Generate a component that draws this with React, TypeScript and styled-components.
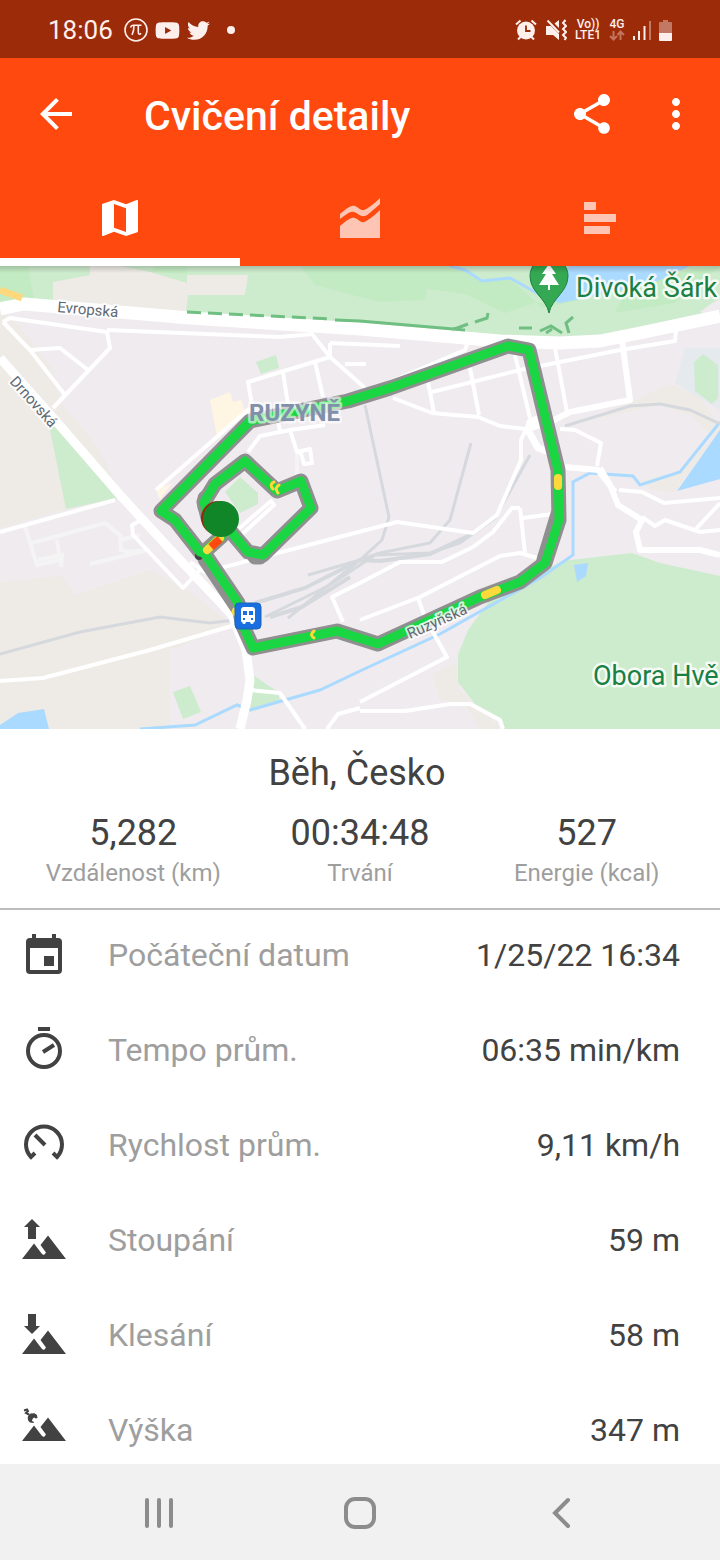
import React from "react";
import styled, { createGlobalStyle } from "styled-components";
import { FaYoutube, FaTwitter } from "react-icons/fa";
import { MdArrowBack, MdMap, MdMoreVert, MdShare } from "react-icons/md";

const Global = createGlobalStyle`
  *, *::before, *::after { box-sizing: border-box; }
  body { margin: 0; background: #fff; color: #424242; font-family: Roboto, "Liberation Sans", sans-serif; }
  svg { display: block; }
`;

const Screen = styled.div`
  display: flex;
  flex-direction: column;
  height: 100vh;
`;

const StatusBar = styled.div`
  display: flex;
  flex: none;
  align-items: center;
  justify-content: space-between;
  height: 58px;
  padding: 2px 48px 0;
  background: #9c2b0a;
  color: #fdf0ec;
`;

const StatusGroup = styled.div<{ $gap: number }>`
  display: flex;
  align-items: center;
  gap: ${(p) => p.$gap}px;
`;

const Clock = styled.time`
  margin-right: 4px;
  font-size: 26px;
  line-height: 32px;
`;

const Dot = styled.span`
  width: 8px;
  height: 8px;
  margin-left: 10px;
  border-radius: 50%;
  background: currentColor;
`;

const NetworkLabel = styled.div`
  display: flex;
  flex-direction: column;
  align-items: center;
  font-size: 12px;
  font-weight: 500;
  line-height: 11px;
`;

const Header = styled.header`
  flex: none;
  background: #ff490f;
  color: #fff;
`;

const Toolbar = styled.div`
  display: flex;
  align-items: center;
  height: 112px;
  padding: 0 20px 0 32px;
`;

const IconButton = styled.button`
  display: flex;
  align-items: center;
  justify-content: center;
  width: 48px;
  height: 48px;
  padding: 0;
  border: 0;
  background: none;
  color: inherit;
`;

const Actions = styled.div`
  display: flex;
  gap: 36px;
`;

const Title = styled.h1`
  flex: 1;
  margin: 4px 0 0 64px;
  font-size: 41px;
  font-weight: 500;
  line-height: 48px;
`;

const Tabs = styled.div`
  display: grid;
  grid-template-columns: repeat(3, 1fr);
`;

const Tab = styled.button<{ $active?: boolean }>`
  display: flex;
  align-items: center;
  justify-content: center;
  height: 96px;
  padding: 8px 0 0;
  border: 0;
  border-bottom: 8px solid ${(p) => (p.$active ? "#fff" : "transparent")};
  background: none;
  color: ${(p) => (p.$active ? "#fff" : "#ffc5b4")};
`;

const Content = styled.main`
  flex: 1;
  min-height: 0;
  overflow-y: auto;
  scrollbar-width: none;
`;

const MapPanel = styled.section`
  aspect-ratio: 720 / 463;
  overflow: hidden;
`;

const MapDrawing = styled.svg`
  width: 100%;
  height: 100%;
  font-family: Roboto, "Liberation Sans", sans-serif;
`;

const Summary = styled.section`
  padding: 22px 20px 19px;
  border-bottom: 2px solid #bdbdbd;
  text-align: center;
`;

const Activity = styled.h2`
  margin: 0;
  padding-right: 6px;
  font-size: 36px;
  font-weight: 400;
  line-height: 44px;
`;

const Totals = styled.dl`
  display: grid;
  grid-template-columns: repeat(3, 1fr);
  margin: 14px 0 0;
`;

const Total = styled.div`
  display: flex;
  flex-direction: column-reverse;
`;

const TotalLabel = styled.dt`
  color: #9e9e9e;
  font-size: 24px;
  line-height: 32px;
`;

const TotalValue = styled.dd`
  margin: 0;
  font-size: 36px;
  line-height: 48px;
`;

const Details = styled.dl`
  display: flex;
  flex-direction: column;
  gap: 5px;
  margin: 0;
`;

const Detail = styled.div`
  display: flex;
  align-items: center;
  height: 90px;
  padding: 0 40px 0 20px;
  font-size: 32px;
  line-height: 40px;
`;

const DetailLabel = styled.dt`
  flex: 1;
  padding-left: 40px;
  color: #9e9e9e;
`;

const DetailValue = styled.dd`
  margin: 0;
`;

const NavBar = styled.nav`
  display: grid;
  flex: none;
  grid-template-columns: repeat(3, 1fr);
  justify-items: center;
  align-items: center;
  height: 96px;
  padding: 2px 58px 0;
  background: #f1f1f1;
  color: #8c8c8c;
`;

const PiIcon = () => (
  <svg width="24" height="24" viewBox="0 0 24 24" fill="none" stroke="currentColor" strokeWidth="1.6" aria-hidden="true">
    <circle cx="12" cy="12" r="11" />
    <path d="M6.500 9.500c.6-1.700 1.200-2.200 2.500-2.200h8.500M10 7.500c0 4-.5 6.500-2 9.300M14.300 7.500v6.500c0 2.500 1.500 2.800 2.700 1.200" />
  </svg>
);

const AlarmIcon = () => (
  <svg width="22" height="22" viewBox="0 0 22 22" fill="none" stroke="currentColor" aria-hidden="true">
    <path d="M1 5.500 5.500 1.500M21 5.500 16.500 1.500M3 20.500l3-3M19 20.500l-3-3" strokeWidth="2" />
    <circle cx="11" cy="11.500" r="9" fill="currentColor" stroke="none" />
    <path d="M11 6.500v5.500h4.500" stroke="#9c2b0a" strokeWidth="1.800" />
  </svg>
);

const MuteIcon = () => (
  <svg width="22" height="22" viewBox="0 0 22 22" fill="currentColor" aria-hidden="true">
    <path d="M1 7h5l8 8v6l-6-5H1zM9.500 4.500 14 1v8z" />
    <path d="M2.500 1.500 14 13.500" stroke="currentColor" strokeWidth="2" />
    <path d="M20.500 1l-2.500 3 3 3-3 3 3 3-3 3 3 3-1.500 2" fill="none" stroke="currentColor" strokeWidth="2" />
  </svg>
);

const DataArrows = () => (
  <svg width="16" height="11" viewBox="0 0 16 11" fill="none" stroke="#c4735c" strokeWidth="2" aria-hidden="true">
    <path d="M4.500 1v8M1 6l3.500 3.500L8 6M11.500 10V2M8.500 5l3-3.500L15 5" />
  </svg>
);

const SignalIcon = () => (
  <svg width="18" height="20" viewBox="0 0 18 20" fill="currentColor" aria-hidden="true">
    <path d="M0 16h2v4H0zM5 11h2v9H5zM10.500 6h2v14h-2z" />
    <path d="M16 1h2v19h-2z" opacity=".4" />
  </svg>
);

const BatteryIcon = () => (
  <svg width="13" height="21" viewBox="0 0 13 21" fill="currentColor" aria-hidden="true">
    <path d="M4 0h5v2h3a1 1 0 0 1 1 1v10H0V3a1 1 0 0 1 1-1h3z" opacity=".4" />
    <path d="M0 13h13v7a1 1 0 0 1-1 1H1a1 1 0 0 1-1-1z" />
  </svg>
);

const AreaChartIcon = () => (
  <svg width="40" height="40" viewBox="0 0 40 40" fill="currentColor" aria-hidden="true">
    <path d="M0 16C8 9 12 7 15 8s6 5 9 4 9-5 16-12v6c-8 7-12 11-15 12-5 1-7-3-11-4S6 17 0 21z" />
    <path d="M0 28c8-7 12-9 15-8s6 5 9 4 9-5 16-12v28H0z" />
  </svg>
);

const BarsIcon = () => (
  <svg width="32" height="32" viewBox="0 0 32 32" fill="currentColor" aria-hidden="true">
    <path d="M0 0h12v8H0zM0 12h32v8H0zM0 24h26v8H0z" />
  </svg>
);

const DetailIcon = ({ children }: { children: React.ReactNode }) => (
  <svg width="48" height="48" viewBox="0 0 48 48" fill="#424242" aria-hidden="true">
    {children}
  </svg>
);

const calendar = (
  <path
    fillRule="evenodd"
    d="M12 3h4v4h16V3h4v4h2a4 4 0 0 1 4 4v28a4 4 0 0 1-4 4H10a4 4 0 0 1-4-4V11a4 4 0 0 1 4-4h2zM10 17v22h28V17zM24 25h10v10H24z"
  />
);

const timer = (
  <g fill="none" stroke="#424242" strokeWidth="4">
    <path d="M18 3h12M23 26l11-7" />
    <circle cx="24" cy="25" r="16" />
  </g>
);

const gauge = (
  <g fill="none" stroke="#424242" strokeWidth="4">
    <path d="M15 32 11 36A18 18 0 1 1 37 36l-4-4M15 14l10 10" />
  </g>
);

const mountains = <path d="M2 43 14 27.500l8 10.500 2 1 2-2.500-5.500-7.500L28 19.500l18 23.500z" />;

const ascent = (
  <>
    <path d="M12 3l8 8h-4v12H8V11H4z" />
    {mountains}
  </>
);

const descent = (
  <>
    <path d="M8 3h8v12h4l-8 8-8-8h4z" />
    {mountains}
  </>
);

const altitude = (
  <>
    <path d="M4 4.500 7 3.500 8 5 6 7l3 1.500" fill="none" stroke="#424242" strokeWidth="2" />
    <path d="M8 10q2-3.500 5-2.500l1-.5 3 2 .5 3-1.500.5-2-1-1.500 1.500-.5 2 2 1-.5 1-3.500-.5q-3-2-2-6.500z" />
    <path d="M2 35 14 19.500l8 10.500 2 1 2-2.500-5.500-7.500L28 11.500 46 35z" />
  </>
);

const details = [
  { icon: calendar, label: "Počáteční datum", value: "1/25/22 16:34" },
  { icon: timer, label: "Tempo prům.", value: "06:35 min/km" },
  { icon: gauge, label: "Rychlost prům.", value: "9,11 km/h" },
  { icon: ascent, label: "Stoupání", value: "59 m" },
  { icon: descent, label: "Klesání", value: "58 m" },
  { icon: altitude, label: "Výška", value: "347 m" },
];

const totals = [
  { label: "Vzdálenost (km)", value: "5,282" },
  { label: "Trvání", value: "00:34:48" },
  { label: "Energie (kcal)", value: "527" },
];

const outerRoute =
  "M204 553 238 603 243 626 253 648 337 631 378 644 480 597 520 582 545 563 559 520 558 470 529 350 508 346 390 388 348 401 250 421 161 511 175 520 200 552";
const innerRoute = "M222 536 203 553M232 533 248 552 263 555 311 508 301 481 277 491 245 461 215 484 204 502 208 518";

const RouteMap = () => (
  <MapDrawing viewBox="0 266 720 463" preserveAspectRatio="xMidYMid slice" role="img" aria-label="Trasa běhu">
    <defs>
      <linearGradient id="header-shadow" x1="0" y1="0" x2="0" y2="1">
        <stop offset="0" stopOpacity=".18" />
        <stop offset="1" stopOpacity="0" />
      </linearGradient>
    </defs>
    <path fill="#efebef" d="M0 266h720v463H0z" />
    <g fill="#eeebe6">
      <path d="M0 310 18 325 52 368 60 402 80 425 100 452 122 496 66 509 0 528zM60 415 75 425 105 460 122 500 55 428z" />
      <path d="M0 582 62 576 75 595 150 570 185 588 232 625 170 650V729H0z" />
      <path d="M567 425 625 405 670 384 700 397 720 428 715 440 690 415 660 405zM432 675 458 662 460 690 502 729H480L465 704 440 700zM640 480 680 473 720 430 675 492 650 490z" />
    </g>
    <path fill="#cdebcd" d="M0 266H720V320L600 340H560L500 338 360 327 190 318 60 307 0 303z" />
    <path fill="#c3ebc3" d="M0 266h28l6 34-34 0zM155 266H187v8l-37-2zM300 266H430L425 300 380 302 360 297 315 285zM430 266h25l27 15 28-3 32 30 38-8 50-22 90-12-45 37-60 10 10-20-90 10-30 10-40-19-60-8z" />
    <path fill="#eeebe6" d="M53 282 90 275V266h30l30 6 37 11v-8h61l-3 20h-57l-2 17L53 302z" />
    <path fill="#aadaff" d="M534 291 570 266H690L660 280 640 286 575 300 560 303 542 299z" />
    <path fill="none" stroke="#aadaff" strokeWidth="3" d="M450 266 465 270 482 281 510 278 537 293" />
    <path fill="#efebef" d="M700 312 712 303 720 299V318z" />
    <path fill="#e5eaee" d="M685 348H720V410L675 383z" />
    <path
      fill="#cdebcd"
      d="M694 362 703 354 718 365V398L712 404 695 391zM256 362 276 355 279 368 261 374zM173 692 190 686 201 712 183 719zM253 675 278 692 280 702 250 712zM49 425 58 427 118 498 66 509zM225 492 240 477 258 493V504L240 513z"
    />
    <path fill="#cdebcd" d="M562 561 632 553 660 563 720 576V729H504L500 718 475 704 458 682V655L468 630 490 600 530 578z" />
    <path fill="#fef5e3" d="M210 400 230 392 233 402 241 400 246 413 217 437zM156 490 172 483 160 500z" />
    <path fill="#aadaff" d="M0 725 18 713 44 709 49 729H0zM720 430 677 491 720 479zM574 565 588 563 586 576 577 582z" />
    <path
      fill="none"
      stroke="#aadaff"
      strokeWidth="3"
      d="M140 729 195 725 237 705 250 710 320 690 360 671 440 634 540 578 573 555V482L590 473 633 476 640 485 680 472 720 422"
    />
    <g fill="none" stroke="#d5d9de" strokeWidth="3">
      <path d="M0 654 80 632 160 617 210 623 235 620M565 426 630 406 660 404 690 410 720 424M365 405 389 517 382 540 360 560 288 618M471 443 450 520 430 543 380 553 360 560 308 575M530 455 495 518 460 543 430 553 375 555 330 585 265 617" />
      <path d="M255 603 305 588 360 560 380 561 430 554 470 535M270 617 302 607 350 577" strokeWidth="4" />
    </g>
    <g fill="none" stroke="#f5f4f4" strokeWidth="4">
      <path d="M25 527 37 565 60 560 57 540M32 543 105 523 120 535 121 550 127 552 150 550M120 540 140 535M38 560 62 555 61 567M90 564 145 551M297 452V475" />
    </g>
    <g fill="none" stroke="#fff" strokeWidth="4" strokeLinejoin="round">
      <path d="M3 322 10 318 107 332 110 348 53 408M107 330 280 337 312 334 330 357 365 388M3 322 30 350 65 395M30 350 60 348 88 370M330 343V357L248 382 252 405M283 372 288 405M315 362 323 397M330 343 400 346M345 364H366" />
      <path d="M248 452 260 436 290 430 325 425M290 430 297 452 310 449 312 463 304 464 300 450M278 420 280 432M156 490 250 408M390 382 465 350 468 342M393 398 432 413 478 417 500 426 526 429M428 382 434 413M432 392 520 370 620 350 675 341 676 330M470 368 479 415M515 355 530 418M555 348 567 412" />
      <path d="M560 429 575 430 601 443 597 466M526 429 521 440V460L497 515 473 533 397 522 320 542 205 572 190 562M520 508 512 508 493 532 473 547 442 562H400L360 583 332 597 343 622M360 620 420 597 500 556 520 553 537 558M520 508 525 553M523 518 560 513M418 598 426 620 447 657 360 702M360 711 405 711 450 704 470 704 500 720 503 729M327 729 338 714 360 708" />
      <path d="M619 490 642 492 664 503 720 498M642 517 655 526 665 520 700 532 720 530M695 530 720 503M0 532 115 500M142 520 132 525 133 535 183 588 200 570M0 681 43 678 150 650 235 625M250 690 280 693 305 729M238 538 274 505 271 501 235 532" />
    </g>
    <g fill="none" stroke="#fff" strokeLinejoin="round">
      <path strokeWidth="6" d="M622 340 630 400 570 412 550 422 528 429M600 468 610 485 618 505 642 520 636 532 640 550H700L720 555M565 467 598 470 615 492" />
      <path strokeWidth="7" d="M545 416 530 422 528 430 538 448 552 453" />
      <path strokeWidth="9" d="M0 358 55 420 120 495 180 560 232 615 246 650 250 680 247 700 240 729" />
      <path strokeWidth="13" d="M0 309 24 304 60 307 190 318 360 329 500 341 560 343 600 341 640 333 720 316" />
    </g>
    <path fill="none" stroke="#fed87c" strokeWidth="7" d="M0 290 22 298" />
    <path fill="none" stroke="#70bf82" strokeWidth="3" d="M187 312 334 319" strokeDasharray="14 7" />
    <path fill="none" stroke="#70bf82" strokeWidth="3" d="M335 320 360 321 465 330M452 330 468 324M475 322 487 318 488 313M519 328H532M540 331 551 326 562 333M546 333 552 329M569 333 566 323 573 317" />
    <g fill="none" stroke="#8f8f8f" strokeWidth="15" strokeLinejoin="round" strokeLinecap="round">
      <path d={outerRoute} />
      <path d={innerRoute} />
      <path d="M205 498V507M558 514 544 560M205 559 237 607M255 557H260" />
    </g>
    <circle cx="199" cy="556" r="4" fill="#444" />
    <g fill="none" stroke="#1bd643" strokeWidth="9" strokeLinejoin="round" strokeLinecap="round">
      <path d={outerRoute} />
      <path d={innerRoute} />
    </g>
    <g fill="none" stroke="#fdd93b" strokeWidth="8" strokeLinecap="round">
      <path d="M558 478V486" />
      <path d="M485 595 497 590M207 550 220 538" />
      <path d="M314 631Q309 635 314 638M234 609Q232 612 235 615M274 482Q269 484 273 489M279 485Q274 488 278 493" strokeWidth="3" />
    </g>
    <path stroke="#ff490f" strokeWidth="8" d="M211 547 220 539" />
    <circle cx="218" cy="518" r="17" fill="#8f2b10" />
    <circle cx="221" cy="519" r="18" fill="#108628" />
    <rect x="235" y="603" width="26" height="26" rx="4" fill="#1a6fe0" stroke="#1b62bd" />
    <path fill="#fff" fillRule="evenodd" d="M244 607h8q3 0 3 3v10q0 3-3 3l2 1h-3l-1-2h-4l-1 2h-3l2-1q-3 0-3-3v-10q0-3 3-3zM243 611v4h4v-4zM249 611v4h4v-4zM243 618v2h2v-2zM251 618v2h2v-2z" />
    <path fill="#34a853" stroke="#1d8340" d="M549 313C546 298 530 292 530 276a19 19 0 0 1 38 0C568 292 552 298 549 313z" />
    <path fill="#fff" d="M549 264 542 274h4l-7 11h9v5h2v-5h9l-7-11h4z" />
    <g stroke="#fff" strokeOpacity=".8" strokeLinejoin="round" paintOrder="stroke">
      <g fill="#5f6973" fontSize="15" strokeWidth="4">
        <text transform="translate(57 312) rotate(5)">Evropská</text>
        <text transform="translate(9 382) rotate(48)">Drnovská</text>
        <text transform="translate(410 639) rotate(-24)">Ruzyňská</text>
      </g>
      <text x="249" y="421" fill="#8090aa" fontSize="24" fontWeight="700" strokeOpacity=".6" strokeWidth="5">RUZYNĚ</text>
      <g fill="#198044" fontSize="27" strokeWidth="5">
        <text x="576" y="297">Divoká Šárk</text>
        <text x="593" y="685">Obora Hvě</text>
      </g>
    </g>
    <path fill="url(#header-shadow)" d="M0 266h720v7H0z" />
  </MapDrawing>
);

export default function App() {
  return (
    <Screen>
      <Global />
      <StatusBar>
        <StatusGroup $gap={7}>
          <Clock>18:06</Clock>
          <PiIcon />
          <FaYoutube size={25} />
          <FaTwitter size={23} />
          <Dot />
        </StatusGroup>
        <StatusGroup $gap={8}>
          <AlarmIcon />
          <MuteIcon />
          <NetworkLabel>
            <span>Vo))</span>
            <span>LTE1</span>
          </NetworkLabel>
          <NetworkLabel>
            <span>4G</span>
            <DataArrows />
          </NetworkLabel>
          <SignalIcon />
          <BatteryIcon />
        </StatusGroup>
      </StatusBar>
      <Header>
        <Toolbar>
          <IconButton aria-label="Zpět">
            <MdArrowBack size={48} />
          </IconButton>
          <Title>Cvičení detaily</Title>
          <Actions>
            <IconButton aria-label="Sdílet">
              <MdShare size={48} />
            </IconButton>
            <IconButton aria-label="Další možnosti">
              <MdMoreVert size={48} />
            </IconButton>
          </Actions>
        </Toolbar>
        <Tabs role="tablist">
          <Tab role="tab" aria-selected="true" aria-label="Mapa" $active>
            <MdMap size={48} />
          </Tab>
          <Tab role="tab" aria-selected="false" aria-label="Graf">
            <AreaChartIcon />
          </Tab>
          <Tab role="tab" aria-selected="false" aria-label="Úseky">
            <BarsIcon />
          </Tab>
        </Tabs>
      </Header>
      <Content>
        <MapPanel>
          <RouteMap />
        </MapPanel>
        <Summary>
          <Activity>Běh, Česko</Activity>
          <Totals>
            {totals.map((t) => (
              <Total key={t.label}>
                <TotalLabel>{t.label}</TotalLabel>
                <TotalValue>{t.value}</TotalValue>
              </Total>
            ))}
          </Totals>
        </Summary>
        <Details>
          {details.map((d) => (
            <Detail key={d.label}>
              <DetailIcon>{d.icon}</DetailIcon>
              <DetailLabel>{d.label}</DetailLabel>
              <DetailValue>{d.value}</DetailValue>
            </Detail>
          ))}
        </Details>
      </Content>
      <NavBar>
        <IconButton aria-label="Poslední aplikace">
          <svg width="30" height="32" viewBox="0 0 30 32" fill="none" stroke="currentColor" strokeWidth="4" strokeLinecap="round">
            <path d="M3 3v26M15 3v26M27 3v26" />
          </svg>
        </IconButton>
        <IconButton aria-label="Domů">
          <svg width="32" height="32" viewBox="0 0 32 32" fill="none" stroke="currentColor" strokeWidth="4">
            <rect x="2" y="2" width="28" height="28" rx="9" />
          </svg>
        </IconButton>
        <IconButton aria-label="Zpět">
          <svg width="20" height="32" viewBox="0 0 20 32" fill="none" stroke="currentColor" strokeWidth="4" strokeLinecap="round">
            <path d="M17 3 4 16l13 13" />
          </svg>
        </IconButton>
      </NavBar>
    </Screen>
  );
}
